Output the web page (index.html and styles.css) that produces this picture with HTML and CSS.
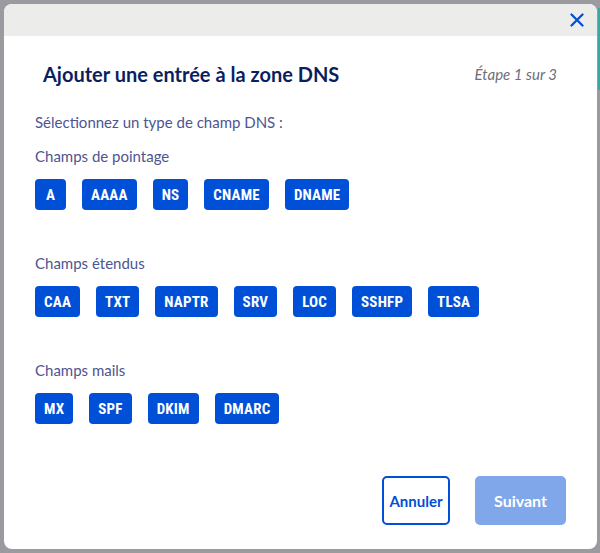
FILE: index.html
```html
<!DOCTYPE html>
<html lang="fr">
<head>
<meta charset="utf-8">
<title>Ajouter une entrée à la zone DNS</title>
<link rel="stylesheet" href="styles.css">
</head>
<body>
<div class="backdrop">
  <div class="bg-strip"></div>
  <div class="modal">
    <div class="modal-header">
      <button class="close" aria-label="Fermer">
        <svg width="14" height="14" viewBox="0 0 14 14"><path d="M1.5 1.5L12.5 12.5M12.5 1.5L1.5 12.5" stroke="#0050d7" stroke-width="2.3" stroke-linecap="round"/></svg>
      </button>
    </div>
    <div class="modal-body">
      <div class="title-row">
        <h1 class="title">Ajouter une entrée à la zone DNS</h1>
        <span class="step">Étape 1 sur 3</span>
      </div>
      <p class="intro">Sélectionnez un type de champ DNS :</p>

      <p class="group-label">Champs de pointage</p>
      <div class="chips">
        <button class="chip">A</button>
        <button class="chip">AAAA</button>
        <button class="chip">NS</button>
        <button class="chip">CNAME</button>
        <button class="chip">DNAME</button>
      </div>

      <p class="group-label spaced">Champs étendus</p>
      <div class="chips">
        <button class="chip">CAA</button>
        <button class="chip">TXT</button>
        <button class="chip">NAPTR</button>
        <button class="chip">SRV</button>
        <button class="chip">LOC</button>
        <button class="chip">SSHFP</button>
        <button class="chip">TLSA</button>
      </div>

      <p class="group-label spaced">Champs mails</p>
      <div class="chips">
        <button class="chip">MX</button>
        <button class="chip">SPF</button>
        <button class="chip">DKIM</button>
        <button class="chip">DMARC</button>
      </div>
    </div>
    <div class="modal-footer">
      <button class="btn btn-outline">Annuler</button>
      <button class="btn btn-disabled">Suivant</button>
    </div>
  </div>
</div>
</body>
</html>
```

FILE: styles.css
```css
* { box-sizing: border-box; }
html, body {
  margin: 0;
  padding: 0;
  width: 600px;
  height: 553px;
  overflow: hidden;
}
body {
  font-family: Lato, "Noto Sans", sans-serif;
  background: #9a9a9f;
}
.backdrop {
  position: relative;
  width: 600px;
  height: 553px;
  padding: 4px 3px 4px 4px;
}
.bg-strip {
  position: absolute;
  right: 0;
  top: 8px;
  width: 2px;
  height: 82px;
  background: #3aa7a0;
}
.modal {
  position: relative;
  width: 593px;
  height: 545px;
  background: #fff;
  border-radius: 8px;
  overflow: hidden;
  display: flex;
  flex-direction: column;
}
.modal-header {
  height: 32px;
  background: #ecedeb;
  display: flex;
  justify-content: flex-end;
  align-items: center;
  padding-right: 12px;
}
.close {
  border: 0;
  background: transparent;
  padding: 0;
  width: 16px;
  height: 16px;
  display: flex;
  align-items: center;
  justify-content: center;
}
.modal-body {
  padding: 26px 31px 0 31px;
  flex: 1;
}
.title-row {
  display: flex;
  justify-content: space-between;
  align-items: center;
  padding: 0 9px 0 8px;
  height: 24px;
}
.title {
  margin: 0;
  font-size: 20px;
  line-height: 24px;
  font-weight: 700;
  color: #0b1f5f;
}
.step {
  font-size: 15px;
  font-style: italic;
  color: #6e6e78;
}
.intro {
  margin: 26px 0 0;
  font-size: 15px;
  line-height: 20px;
  color: #4d5592;
}
.group-label {
  margin: 14px 0 0;
  font-size: 15px;
  line-height: 20px;
  color: #4d5592;
}
.group-label.spaced {
  margin-top: 43px;
}
.chips {
  display: flex;
  gap: 16px;
  margin-top: 13px;
}
.chip {
  height: 31px;
  min-width: 31px;
  padding: 0 9px;
  border: 0;
  border-radius: 4px;
  background: #0050d7;
  color: #fff;
  font-family: "Liberation Sans Narrow", "Roboto Condensed", Roboto, sans-serif;
  font-size: 15px;
  font-weight: 700;
  letter-spacing: 0.2px;
}
.modal-footer {
  display: flex;
  justify-content: flex-end;
  gap: 25px;
  padding: 0 31px 24px 0;
}
.btn {
  height: 49px;
  border-radius: 5px;
  font-family: inherit;
  font-size: 15px;
  font-weight: 700;
}
.btn-outline {
  width: 68px;
  background: #fff;
  border: 2px solid #0050d7;
  color: #0050d7;
  padding: 0;
}
.btn-disabled {
  width: 91px;
  background: #80a7e9;
  border: 0;
  color: #fff;
  font-size: 16px;
}
```
